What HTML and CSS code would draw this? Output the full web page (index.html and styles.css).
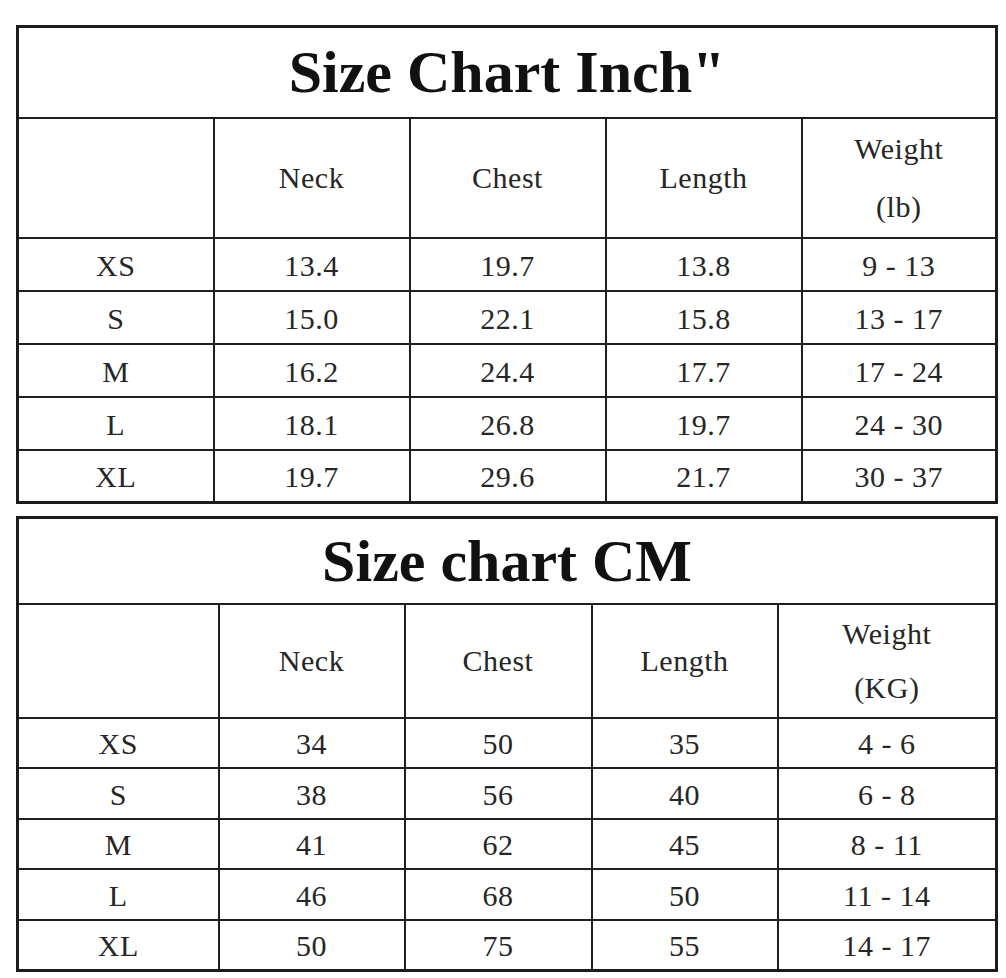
FILE: index.html
```html
<!DOCTYPE html>
<html>
<head>
<meta charset="utf-8">
<link rel="stylesheet" href="styles.css">
</head>
<body>
<div class="page">
  <table class="chart chart-inch">
    <colgroup>
      <col class="c1"><col class="c2"><col class="c3"><col class="c4"><col class="c5">
    </colgroup>
    <tr class="title-row"><th colspan="5" class="title">Size Chart Inch"</th></tr>
    <tr class="head-row">
      <td></td><td>Neck</td><td>Chest</td><td>Length</td>
      <td><span class="line">Weight</span><span class="line">(lb)</span></td>
    </tr>
    <tr><td>XS</td><td>13.4</td><td>19.7</td><td>13.8</td><td>9 - 13</td></tr>
    <tr><td>S</td><td>15.0</td><td>22.1</td><td>15.8</td><td>13 - 17</td></tr>
    <tr><td>M</td><td>16.2</td><td>24.4</td><td>17.7</td><td>17 - 24</td></tr>
    <tr><td>L</td><td>18.1</td><td>26.8</td><td>19.7</td><td>24 - 30</td></tr>
    <tr><td>XL</td><td>19.7</td><td>29.6</td><td>21.7</td><td>30 - 37</td></tr>
  </table>

  <table class="chart chart-cm">
    <colgroup>
      <col class="c1"><col class="c2"><col class="c3"><col class="c4"><col class="c5">
    </colgroup>
    <tr class="title-row"><th colspan="5" class="title">Size chart CM</th></tr>
    <tr class="head-row">
      <td></td><td>Neck</td><td>Chest</td><td>Length</td>
      <td><span class="line">Weight</span><span class="line">(KG)</span></td>
    </tr>
    <tr><td>XS</td><td>34</td><td>50</td><td>35</td><td>4 - 6</td></tr>
    <tr><td>S</td><td>38</td><td>56</td><td>40</td><td>6 - 8</td></tr>
    <tr><td>M</td><td>41</td><td>62</td><td>45</td><td>8 - 11</td></tr>
    <tr><td>L</td><td>46</td><td>68</td><td>50</td><td>11 - 14</td></tr>
    <tr><td>XL</td><td>50</td><td>75</td><td>55</td><td>14 - 17</td></tr>
  </table>
</div>
</body>
</html>
```

FILE: styles.css
```css
html, body {
  margin: 0;
  padding: 0;
  background: #ffffff;
}

.page {
  padding: 25px 0 0 16px;
  display: flex;
  flex-direction: column;
  gap: 12px;
}

.chart {
  width: 979px;
  border-collapse: collapse;
  table-layout: fixed;
  border: 3px solid #1c1c1c;
  font-family: "Liberation Serif", "Times New Roman", serif;
  color: #262626;
}

.chart td,
.chart th {
  border: 2px solid #1f1f1f;
  text-align: center;
  vertical-align: middle;
  padding: 3px 0 0 0;
  font-size: 30px;
  line-height: 34px;
  letter-spacing: 0.5px;
  font-weight: normal;
}

.chart .title {
  font-size: 60px;
  line-height: 66px;
  font-weight: bold;
  color: #111111;
  letter-spacing: 0;
  padding: 0;
}

.line {
  display: block;
}

/* Inch table */
.chart-inch .c1,
.chart-inch .c2,
.chart-inch .c3,
.chart-inch .c4 { width: 196px; }
.chart-inch .c5 { width: 195px; }

.chart-inch .title-row { height: 91px; }
.chart-inch .head-row { height: 120px; }
.chart-inch tr { height: 53px; }
.chart-inch .head-row .line { line-height: 58px; }
.chart-inch .head-row td { padding-top: 0; }

/* CM table */
.chart-cm .c1 { width: 201px; }
.chart-cm .c2 { width: 186px; }
.chart-cm .c3 { width: 187px; }
.chart-cm .c4 { width: 186px; }
.chart-cm .c5 { width: 219px; }

.chart-cm .title-row { height: 86px; }
.chart-cm .head-row { height: 114px; }
.chart-cm tr { height: 50.5px; }
.chart-cm .head-row .line { line-height: 54px; }
.chart-cm .head-row td { padding-top: 0; }
```
